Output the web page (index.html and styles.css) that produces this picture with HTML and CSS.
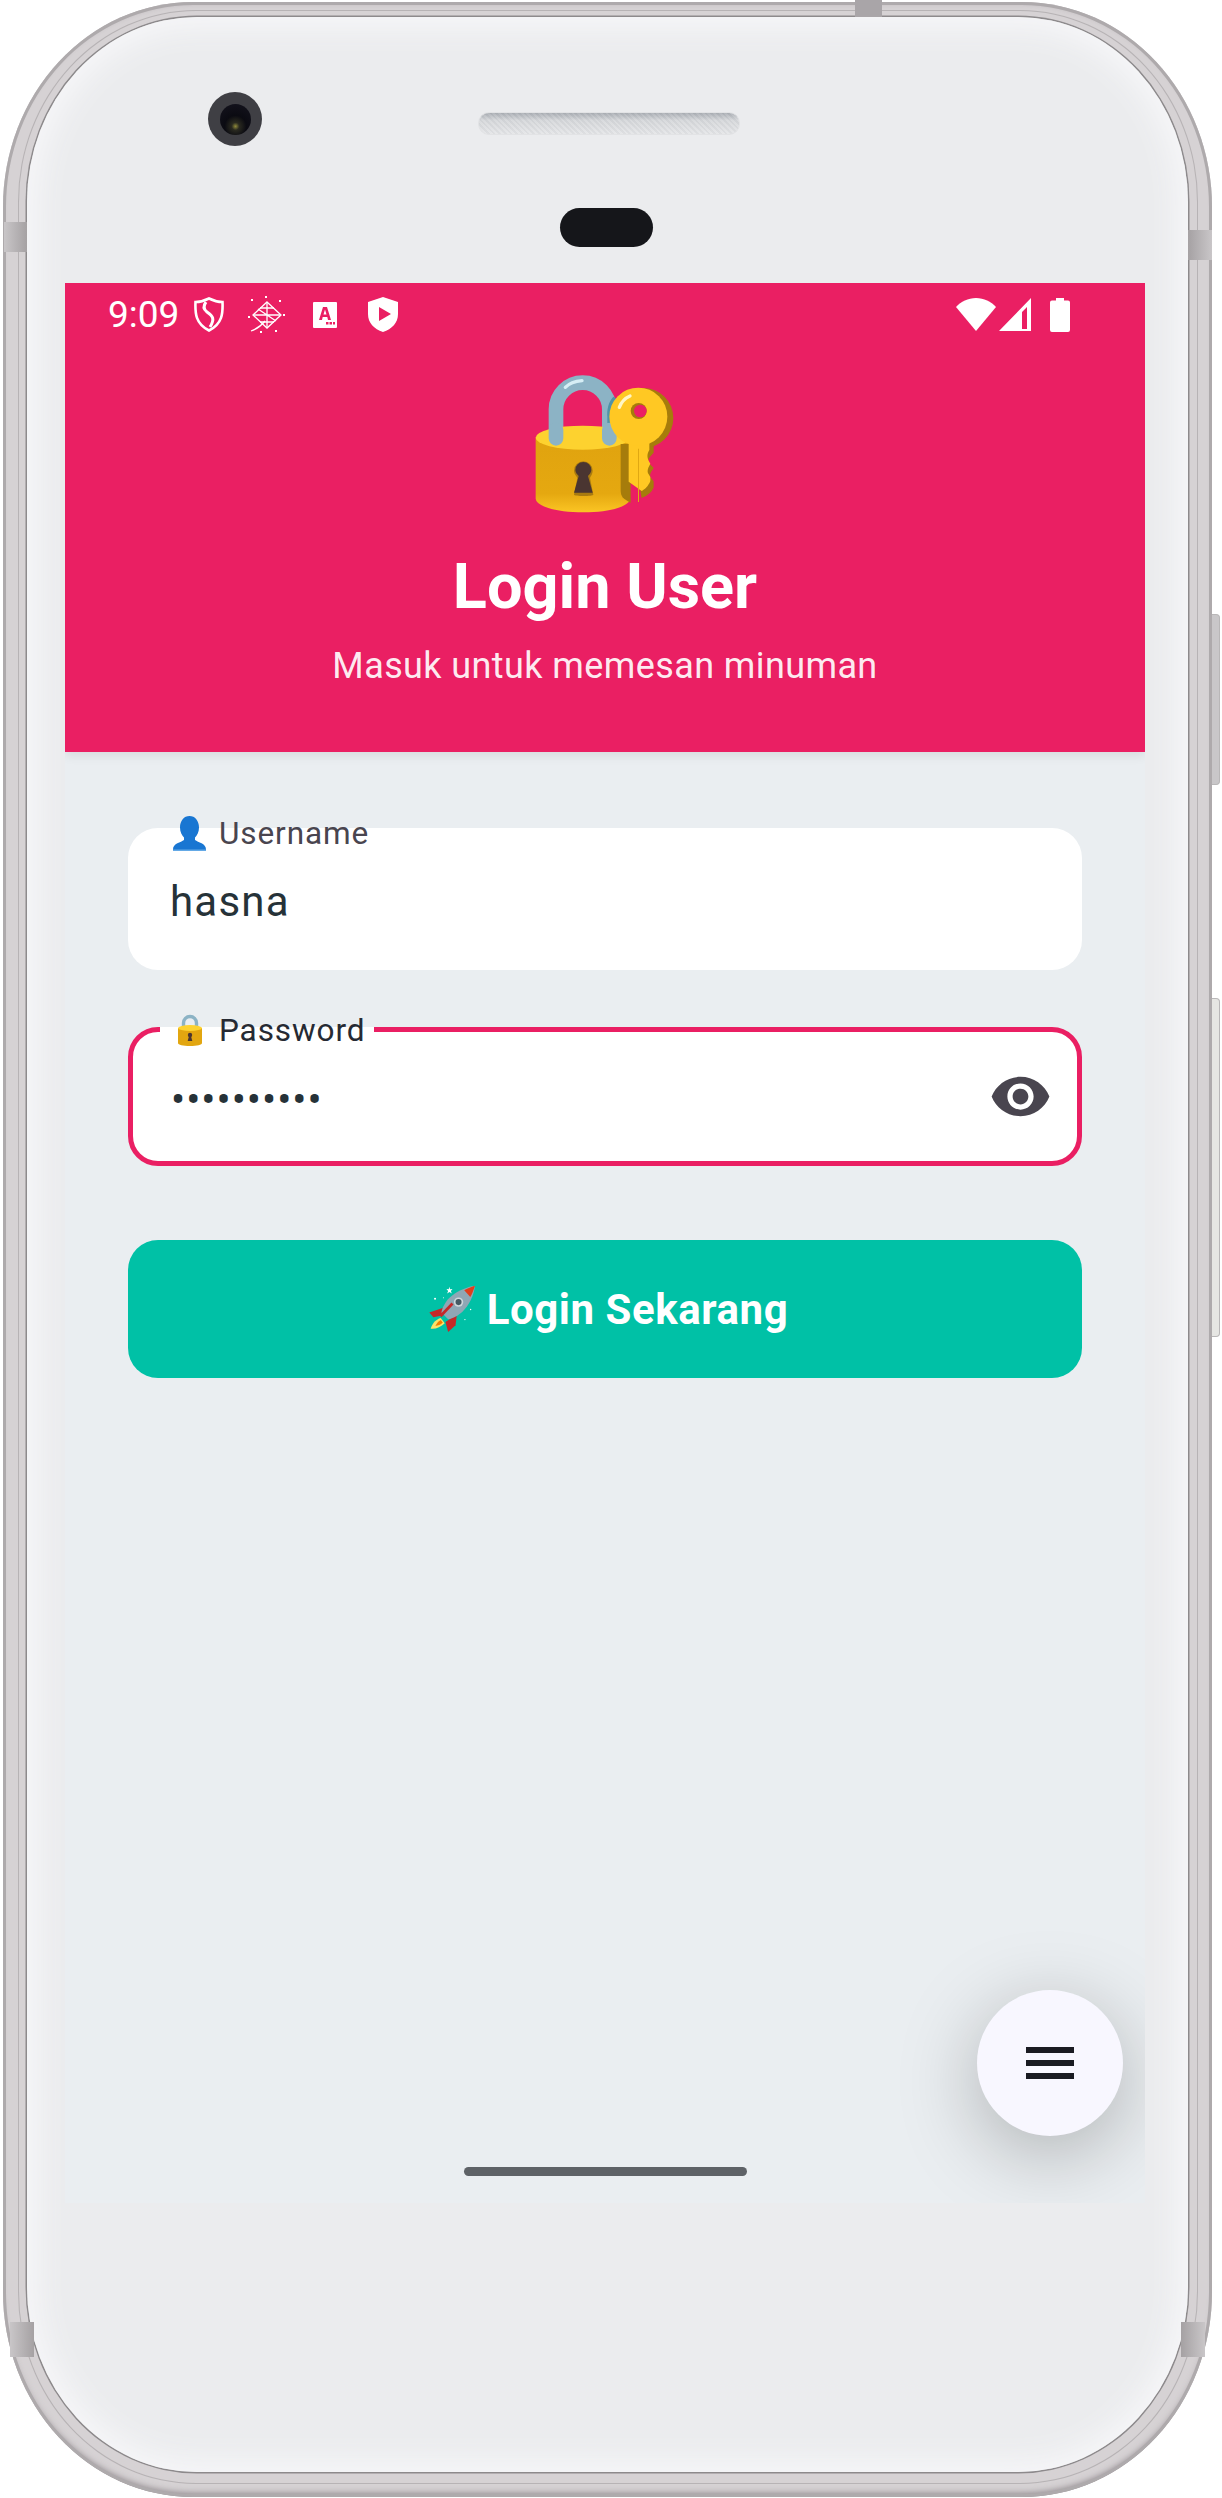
FILE: index.html
```html
<!DOCTYPE html>
<html lang="id">
<head>
    <meta charset="UTF-8">
    <meta name="viewport" content="width=device-width, initial-scale=1.0">
    <title>Login User</title>
    <link rel="stylesheet" href="styles.css">
</head>
<body>

<svg class="defs" width="0" height="0">
    <defs>
        <linearGradient id="lockBody" x1="0" y1="0" x2="0" y2="1">
            <stop offset="0" stop-color="#e0a30f"/>
            <stop offset="0.75" stop-color="#e5a810"/>
            <stop offset="1" stop-color="#fbc524"/>
        </linearGradient>
    </defs>
</svg>

<div class="phone">
    <span class="band band-top"></span>
    <span class="band band-left-top"></span>
    <span class="band band-left-bottom"></span>
    <span class="band band-right-top"></span>
    <span class="band band-right-bottom"></span>
    <span class="side-btn power"></span>
    <span class="side-btn volume"></span>
    <span class="camera"><span class="lens"></span></span>
    <span class="speaker"></span>
    <span class="sensor"></span>

    <div class="screen">
        <header class="header">
            <div class="status-bar">
                <span class="time">9:09</span>
                <svg class="st-shield" viewBox="0 0 30 35"><path d="M15 1.500C20 4 25 5 28.500 5c.5 11 0 22-13.500 28.500C1.500 27 1 16 1.500 5 5 5 10 4 15 1.500z" fill="none" stroke="#fff" stroke-width="2.600"/><path d="M12 5c-3 4-3 7 1 10 6 4 8 7 3 15" fill="none" stroke="#fff" stroke-width="3"/></svg>
                <svg class="st-spark" viewBox="0 0 37 37"><g fill="none" stroke="#fff" stroke-width="1.300"><path d="M19 6l14 13-14 13L5 19z"/><path d="M12 12h14M12 26h14M19 6v26M10 13l18 12M5 19h28"/><path d="M3 35c6-2 10-5 14-10"/></g><g fill="#fff"><rect x="3" y="3" width="2" height="2"/><rect x="17" y="0" width="2" height="2"/><rect x="31" y="4" width="2" height="2"/><rect x="35" y="18" width="2" height="2"/><rect x="0" y="20" width="2" height="2"/><rect x="27" y="34" width="2" height="2"/><rect x="12" y="35" width="2" height="2"/></g></svg>
                <svg class="st-a" viewBox="0 0 24 26"><path fill-rule="evenodd" d="M1 0h22a1 1 0 0 1 1 1v24a1 1 0 0 1-1 1H1a1 1 0 0 1-1-1V1a1 1 0 0 1 1-1zM10 5L6 18h3l.7-3h4.600l.7 3h3L14 5zM10.500 12.500L12 7.500l1.500 5zM13 20h2.500v2.500H13zM16.500 20H19v2.500h-2.500zM20 20h2v2.500h-2z" fill="#fff"/></svg>
                <svg class="st-play" viewBox="0 0 30 35"><path fill-rule="evenodd" d="M15 0l15 5v12c0 9-6 15-15 18C6 32 0 26 0 17V5zM11 10v14l12-7z" fill="#fff"/></svg>
                <span class="st-gap"></span>
                <svg class="st-wifi" viewBox="0 0 40 33"><path d="M0 9C5 3.500 12 0 20 0s15 3.500 20 9L20 33z" fill="#fff"/></svg>
                <svg class="st-signal" viewBox="0 0 32 33"><path fill-rule="evenodd" d="M32 0v33H0zM23 14v17h5V9z" fill="#fff"/></svg>
                <svg class="st-battery" viewBox="0 0 20 34"><path d="M6 0h8v2.500h4a2 2 0 0 1 2 2V32a2 2 0 0 1-2 2H2a2 2 0 0 1-2-2V4.500a2 2 0 0 1 2-2h4z" fill="#fff"/></svg>
            </div>

            <svg class="hero-emoji" viewBox="105 72 420 420">
                <path d="M168 265V178a80 80 0 0 1 160 0v87" fill="none" stroke="#8cb3c5" stroke-width="44" stroke-linecap="round"/>
                <path d="M196 112c10-10 28-18 50-20" fill="none" stroke="#d6eef5" stroke-width="10" stroke-linecap="round"/>
                <path d="M340 140c-14 14-20 40-18 60v70c10 0 30 0 34-6V150z" fill="#4f93a8"/>
                <path d="M107 262v183c0 25 63 42 143 42s140-17 140-42V262z" fill="url(#lockBody)"/>
                <ellipse cx="248" cy="263" rx="141" ry="36" fill="#fdd22f"/>
                <path d="M168 265V240M328 265V240" fill="none" stroke="#8cb3c5" stroke-width="44" stroke-linecap="round"/>
                <path d="M222 362a28 28 0 1 1 56 0c0 10-6 16-8 22l10 50c0 5-58 5-58 0l10-50c-2-6-10-12-10-22z" fill="#a87a10"/>
                <path d="M226 360a24 24 0 1 1 48 0c0 8-6 14-10 18l14 50h-56l14-50c-4-4-10-10-10-18z" fill="#4a3531"/>
                <path d="M362 282h30v176l-8-4c-14-8-22-14-22-34z" fill="#a67c0b"/>
                <path d="M395 280h66v28l-12 14c-6 8-6 16 4 24l8 8-8 12c-4 8-4 14 2 20l6 8v18c-6 16-20 26-36 32z" fill="#a67c0b"/>
                <circle cx="430" cy="204" r="90" fill="#a67c0b"/>
                <path d="M386 270h62v30c-6 10-8 20-2 32l5 9-6 12c-3 8-3 14 1 20l5 8v12c-6 16-18 26-26 30l-39-28z" fill="#ffc823"/>
                <path d="M414 296h3v160h-3z" fill="#e0a812"/>
                <circle cx="415" cy="200" r="87" fill="#ffc823"/>
                <circle cx="416" cy="183" r="24" fill="#a67c0b"/>
                <circle cx="421" cy="183" r="19" fill="#eb2064"/>
                <path d="M358 172c6-16 18-28 32-34" fill="none" stroke="#fff6c4" stroke-width="10" stroke-linecap="round"/>
            </svg>
            <h1 class="title">Login User</h1>
            <p class="subtitle">Masuk untuk memesan minuman</p>
        </header>

        <main class="form">
            <div class="field">
                <div class="field-label">
                    <svg class="label-icon" viewBox="0 0 33 35"><path d="M16.500 0c5.500 0 9.500 4.800 9.500 11.500 0 4.500-2 8-4 10v2.500c3 2.500 11 3 11 9.500v1.500H0v-1.500C0 27 8 26.500 11 24v-2.500c-2-2-4-5.500-4-10C7 4.800 11 0 16.500 0z" fill="#1976d2"/><path d="M0 33.500h33V35H0z" fill="#64a9e6"/></svg>
                    <span>Username</span>
                </div>
                <span class="value">hasna</span>
            </div>

            <div class="field active">
                <span class="notch"></span>
                <div class="field-label">
                    <svg class="label-icon small" viewBox="0 0 26 32"><path d="M6.500 16V9a6.500 6.500 0 0 1 13 0v7" fill="none" stroke="#8cb3c5" stroke-width="3.400"/><path d="M1 14h24v15c0 2-5 3-12 3S1 31 1 29z" fill="#e2a610"/><ellipse cx="13" cy="14" rx="12" ry="3" fill="#fdd22f"/><circle cx="13" cy="21" r="2.200" fill="#4a3531"/><path d="M12 22h2l1.300 5h-4.600z" fill="#4a3531"/></svg>
                    <span>Password</span>
                </div>
                <span class="dots">••••••••••</span>
                <svg class="eye" viewBox="0 0 24 24"><path fill="#49454f" d="M12 4.500C7 4.500 2.730 7.610 1 12c1.730 4.390 6 7.500 11 7.500s9.270-3.110 11-7.500c-1.730-4.390-6-7.500-11-7.500zM12 17c-2.760 0-5-2.240-5-5s2.240-5 5-5 5 2.240 5 5-2.240 5-5 5zm0-8c-1.660 0-3 1.340-3 3s1.340 3 3 3 3-1.340 3-3-1.340-3-3-3z"/></svg>
            </div>

            <button class="login-btn">
                <svg class="rocket" viewBox="85 205 140 140">
                    <path d="M132 268l-46 16 12 14 30 -6z" fill="#c62828"/>
                    <path d="M168 290l-4 32-22 20-8-30z" fill="#c62828"/>
                    <path d="M120 300c-14 4-24 14-30 32 14 2 30-4 42-16z" fill="#fbe26a"/>
                    <path d="M120 306c-8 4-12 10-16 18 8 0 16-4 22-10z" fill="#f57c00"/>
                    <path d="M146 240c20-18 44-30 76-36-4 32-18 58-36 76-12 12-30 22-44 24l-20-20c2-14 12-32 24-44z" fill="#8fa7b5"/>
                    <path d="M190 218c10-6 20-10 32-14-4 12-8 24-14 34z" fill="#e03e1c"/>
                    <path d="M122 298l-6-6 36-38 6 6z" fill="#c62828"/>
                    <circle cx="173" cy="253" r="14" fill="#cfd8dc"/>
                    <circle cx="173" cy="253" r="9" fill="#455a64"/>
                    <path d="M145 207l3 8 7-1-5 6 3 7-7-4-7 4 3-7-5-6 7 1z" fill="#fff"/>
                    <circle cx="103" cy="243" r="3" fill="#fff"/>
                    <circle cx="128" cy="240" r="1.500" fill="#fff"/>
                    <circle cx="209" cy="275" r="2" fill="#fff"/>
                    <circle cx="192" cy="305" r="2" fill="#fff"/>
                </svg>
                <span>Login Sekarang</span>
            </button>
        </main>

        <button class="fab">
            <svg viewBox="0 0 48 32"><path d="M0 0h48v6H0zM0 13h48v6H0zM0 26h48v6H0z" fill="#1a1b22"/></svg>
        </button>
        <span class="home-bar"></span>
    </div>
</div>

</body>
</html>
```
FILE: styles.css
```css
* {
    box-sizing: border-box;
}
html, body {
    margin: 0;
    background: #ffffff;
}
body {
    width: 1222px;
    height: 2498px;
    overflow: hidden;
    font-family: Roboto, "Liberation Sans", sans-serif;
}
.defs {
    position: absolute;
}

/* phone body */
.phone {
    position: relative;
    width: 1209px;
    height: 2495px;
    margin: 2px 0 0 3px;
    padding: 281px 0 0 62px;
    border-radius: 190px / 205px;
    background: #d6d2d4;
    box-shadow: inset 0 0 0 3px #aeaaac, inset 0 -7px 6px -3px rgba(90, 80, 85, 0.55), inset 0 5px 4px -3px rgba(120, 110, 115, 0.3);
}
.phone::before {
    content: "";
    position: absolute;
    inset: 8px 14px 13px 15px;
    border: 1.5px solid #98949680;
    border-radius: 178px / 192px;
}
.phone::after {
    content: "";
    position: absolute;
    inset: 15px 24px 25px 24px;
    border-radius: 170px / 185px;
    background: #ebecee;
    box-shadow: inset 0 0 30px 10px #f7f7f9, 0 0 0 1.5px #8d8a8c;
}
.band {
    position: absolute;
    background: linear-gradient(90deg, #c9c6c8, #a5a1a3);
    z-index: 2;
}
.band-top { left: 852px; top: -2px; width: 27px; height: 17px; background: #a9a5a8; }
.band-left-top { left: 1px; top: 220px; width: 23px; height: 30px; }
.band-left-bottom { left: 7px; top: 2320px; width: 24px; height: 35px; }
.band-right-top { right: 0; top: 228px; width: 24px; height: 30px; background: linear-gradient(90deg, #a5a1a3, #c9c6c8); }
.band-right-bottom { right: 7px; top: 2320px; width: 24px; height: 35px; background: linear-gradient(90deg, #a5a1a3, #c9c6c8); }
.side-btn {
    position: absolute;
    left: 100%;
    width: 8px;
    border: 1px solid #b9b7b8;
    border-left: none;
    border-radius: 0 4px 4px 0;
    background: #dcdbdc;
}
.power { top: 612px; height: 171px; background: #c9c7c9; }
.volume { top: 996px; height: 339px; background: #e6e6e3; }
.camera {
    position: absolute;
    left: 205px;
    top: 90px;
    width: 54px;
    height: 54px;
    border-radius: 50%;
    background: #3f3f44;
    display: flex;
    align-items: center;
    justify-content: center;
    z-index: 2;
}
.lens {
    width: 31px;
    height: 31px;
    border-radius: 50%;
    background: radial-gradient(circle at 50% 72%, #8f8a3a 0, #2a2a20 14%, #0b0b12 40%, #15141f 100%);
}
.speaker {
    position: absolute;
    left: 475px;
    top: 110px;
    width: 262px;
    height: 23px;
    border-radius: 11px;
    border: 1px solid #e2e3e5;
    background: repeating-linear-gradient(45deg, rgba(255, 255, 255, 0.1) 0 2px, rgba(150, 155, 160, 0.08) 2px 4px), linear-gradient(#a9adb3, #d5d7da 35%, #e4e5e7);
    z-index: 2;
}
.sensor {
    position: absolute;
    left: 557px;
    top: 206px;
    width: 93px;
    height: 39px;
    border-radius: 20px;
    background: #15161a;
    z-index: 2;
}

/* screen */
.screen {
    position: relative;
    width: 1080px;
    height: 1920px;
    overflow: hidden;
    background: #eaeef1;
    z-index: 1;
}
.header {
    position: relative;
    height: 469px;
    background: #ea1f63;
    box-shadow: 0 4px 10px rgba(0, 0, 0, 0.08);
    color: #ffffff;
    display: flex;
    flex-direction: column;
    align-items: center;
}
.status-bar {
    width: 100%;
    height: 63px;
    padding: 0 75px 0 43px;
    display: flex;
    align-items: center;
    flex-shrink: 0;
}
.time {
    width: 86px;
    font-size: 37px;
}
.st-shield { width: 30px; height: 35px; }
.st-spark { width: 37px; height: 37px; margin-left: 24px; }
.st-a { width: 24px; height: 26px; margin-left: 28px; }
.st-play { width: 30px; height: 35px; margin-left: 31px; }
.st-gap { flex: 1; }
.st-wifi { width: 40px; height: 33px; }
.st-signal { width: 32px; height: 33px; margin-left: 3px; }
.st-battery { width: 20px; height: 34px; margin-left: 19px; }
.hero-emoji {
    width: 140px;
    height: 140px;
    margin-top: 28px;
    flex-shrink: 0;
}
.title {
    margin: 36px 0 0;
    font-size: 63px;
    line-height: 74px;
    font-weight: 700;
}
.subtitle {
    margin: 20px 0 0;
    font-size: 36px;
    line-height: 44px;
    letter-spacing: 0.4px;
    color: rgba(255, 255, 255, 0.93);
}

/* form */
.form {
    padding: 76px 63px 0;
    display: flex;
    flex-direction: column;
}
.field {
    position: relative;
    height: 142px;
    padding: 0 42px;
    border-radius: 30px;
    background: #ffffff;
    display: flex;
    align-items: center;
    justify-content: space-between;
}
.field.active {
    height: 139px;
    margin-top: 57px;
    padding: 0 38px;
    border: 5px solid #ea1f63;
}
.notch {
    position: absolute;
    left: 27px;
    top: -5px;
    width: 214px;
    height: 5px;
    background: #ffffff;
}
.field-label {
    position: absolute;
    left: 45px;
    top: -13px;
    height: 36px;
    display: flex;
    align-items: center;
    gap: 13px;
    font-size: 31.5px;
    letter-spacing: 0.9px;
    color: #49454f;
}
.active .field-label {
    left: 41px;
    top: -20px;
    color: #262a33;
}
.label-icon {
    width: 33px;
    height: 35px;
}
.label-icon.small {
    width: 26px;
    height: 32px;
    margin: 0 3px;
}
.value {
    padding-top: 5px;
    font-size: 42px;
    letter-spacing: 1.2px;
    color: #263238;
}
.dots {
    padding-top: 5px;
    font-size: 42px;
    letter-spacing: 1px;
    color: #263238;
}
.eye {
    width: 63px;
    height: 63px;
    margin-right: -13px;
}
.login-btn {
    margin-top: 74px;
    height: 138px;
    padding: 0 0 0 7px;
    border: none;
    border-radius: 30px;
    background: #00c1a6;
    color: #ffffff;
    font-family: inherit;
    font-size: 42px;
    font-weight: 700;
    letter-spacing: 0.55px;
    display: flex;
    align-items: center;
    justify-content: center;
    gap: 11px;
}
.rocket {
    width: 47px;
    height: 47px;
}
.fab {
    position: absolute;
    left: 912px;
    top: 1707px;
    width: 146px;
    height: 146px;
    padding: 0;
    border: none;
    border-radius: 50%;
    background: #f8f7ff;
    box-shadow: 0 18px 80px rgba(0, 0, 0, 0.26);
    display: flex;
    align-items: center;
    justify-content: center;
}
.fab svg {
    width: 48px;
    height: 32px;
}
.home-bar {
    position: absolute;
    left: 399px;
    top: 1884px;
    width: 283px;
    height: 9px;
    border-radius: 5px;
    background: #5e6267;
}
```
